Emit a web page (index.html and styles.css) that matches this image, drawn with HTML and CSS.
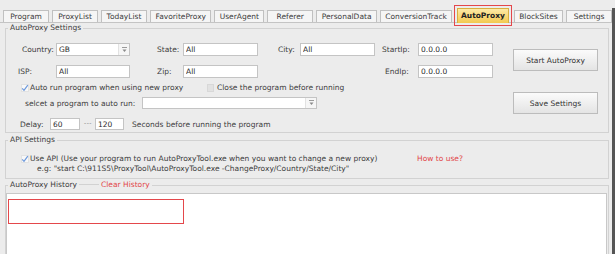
FILE: index.html
```html
<!DOCTYPE html>
<html lang="en">
<head>
	<meta charset="UTF-8">
	<title>AutoProxy</title>
	<link rel="stylesheet" href="styles.css">
</head>
<body>
<div class="window">
	<ul class="tabs">
		<li>Program</li>
		<li>ProxyList</li>
		<li>TodayList</li>
		<li>FavoriteProxy</li>
		<li>UserAgent</li>
		<li>Referer</li>
		<li>PersonalData</li>
		<li>ConversionTrack</li>
		<li class="active">AutoProxy</li>
		<li>BlockSites</li>
		<li>Settings</li>
	</ul>

	<fieldset class="group settings">
		<legend>AutoProxy Settings</legend>
		<div class="body">
			<div class="fields">
				<div class="grid">
					<label class="country">Country:</label>
					<div class="select"><span>GB</span><i class="drop"><svg width="7" height="6" viewBox="0 0 7 6"><path d="M1 0.5H6" stroke="#9a9a9a" stroke-width="1"/><path d="M1.5 2.5H5.5L3.5 5Z" fill="#8a8a8a"/></svg></i></div>
					<label class="col3">State:</label>
					<input type="text" value="All">
					<label class="col5">City:</label>
					<input type="text" value="All">
					<label class="col7">StartIp:</label>
					<input type="text" value="0.0.0.0">

					<label>ISP:</label>
					<input type="text" value="All">
					<label class="col3">Zip:</label>
					<input type="text" value="All">
					<label class="col7 endip">EndIp:</label>
					<input type="text" value="0.0.0.0">
				</div>

				<div class="check-row">
					<span class="check first">
						<i class="box"><svg width="8" height="8" viewBox="0 0 8 8"><path d="M1.2 4.4L3 6.3L6.8 1.2" fill="none" stroke="#6b98dc" stroke-width="1.2"/></svg></i>
						Auto run program when using new proxy
					</span>
					<span class="check">
						<i class="box empty"></i>
						Close the program before running
					</span>
				</div>

				<div class="program-row">
					<label>selcet a program to auto run:</label>
					<div class="select wide"><span></span><i class="drop"><svg width="7" height="6" viewBox="0 0 7 6"><path d="M1 0.5H6" stroke="#9a9a9a" stroke-width="1"/><path d="M1.5 2.5H5.5L3.5 5Z" fill="#8a8a8a"/></svg></i></div>
				</div>

				<div class="delay-row">
					<label>Delay:</label>
					<input type="text" class="from" value="60">
					<span class="dash">---</span>
					<input type="text" class="to" value="120">
					<span class="hint">Seconds before running the program</span>
				</div>
			</div>

			<div class="actions">
				<button class="start">Start AutoProxy</button>
				<button class="save">Save Settings</button>
			</div>
		</div>
	</fieldset>

	<fieldset class="group api">
		<legend>API Settings</legend>
		<div class="body">
			<div class="check-row">
				<span class="check use-api">
					<i class="box"><svg width="8" height="8" viewBox="0 0 8 8"><path d="M1.2 4.4L3 6.3L6.8 1.2" fill="none" stroke="#6b98dc" stroke-width="1.2"/></svg></i>
					Use API (Use your program to run AutoProxyTool.exe when you want to change a new proxy)
				</span>
				<a class="link">How to use?</a>
			</div>
			<p class="example">e.g: "start C:\911S5\ProxyTool\AutoProxyTool.exe -ChangeProxy/Country/State/City"</p>
		</div>
	</fieldset>

	<fieldset class="group history">
		<legend>AutoProxy History<span class="sep"></span><a class="link">Clear History</a></legend>
		<div class="body">
			<div class="log">
				<div class="mark"></div>
			</div>
		</div>
	</fieldset>
</div>
</body>
</html>
```

FILE: styles.css
```css
*{
  margin: 0;
  padding: 0;
  box-sizing: border-box;
}

body{
  width: 615px;
  height: 254px;
  overflow: hidden;
  background: #ececec;
  font: 7.5px "DejaVu Sans", Verdana, sans-serif;
  color: #3c3c3c;
}

.window{
  width: 615px;
  height: 254px;
  border-right: 3px solid #555;
}

/* tabs */

.tabs{
  display: flex;
  align-items: flex-end;
  gap: 3px;
  margin-top: 8px;
  padding-left: 3px;
  list-style: none;
  border-bottom: 1px solid #c4c4c4;
}

.tabs li{
  height: 12px;
  min-width: 46px;
  padding: 0 4.5px;
  border: 1px solid #c0c0c0;
  border-bottom: none;
  background: #f5f5f5;
  line-height: 11px;
  text-align: center;
  white-space: nowrap;
}

.tabs li.active{
  height: 15px;
  margin: 0 2px -1px;
  padding: 0 3px;
  line-height: 14px;
  font-weight: bold;
  color: #222;
  background: linear-gradient(#fdeaa6, #f3c94f);
  border-color: #d8b040;
  outline: 1.5px solid #e4474b;
  outline-offset: 2px;
}

/* group boxes */

.group{
  margin: 0 3px 0 5px;
  border: 1px solid #d2d2d2;
  min-width: 0;
}

.group legend{
  margin-left: 2px;
  padding: 0 2px;
  line-height: 10px;
  white-space: nowrap;
}

.link{
  color: #e2474a;
}

/* settings */

.settings .body{
  display: flex;
  padding: 10px 10px 2px 12px;
}

.fields{
  width: 475px;
}

.grid{
  display: grid;
  grid-template-columns: 38px 74px 53px 75px 42px 75px 43px 75px;
  grid-auto-rows: 13px;
  row-gap: 9px;
  align-items: center;
}

.grid label{
  white-space: nowrap;
}

.grid .country{
  padding-left: 4px;
}

.grid .col3{
  grid-column: 3;
  padding-left: 27px;
}

.grid .col5{
  grid-column: 5;
  padding-left: 20px;
}

.grid .col7{
  grid-column: 7;
  padding-left: 7px;
}

.grid .endip{
  padding-left: 10px;
}

input[type=text]{
  width: 100%;
  height: 13px;
  padding: 0 2px;
  border: 1px solid #c4c4c4;
  background: #fff;
  font: inherit;
  color: #2a2a2a;
  outline: none;
}

.select{
  display: flex;
  align-items: stretch;
  height: 13px;
  padding-left: 2px;
  border: 1px solid #c4c4c4;
  background: #fff;
  color: #2a2a2a;
  line-height: 11px;
}

.select span{
  flex: 1;
}

.select .drop{
  display: flex;
  align-items: center;
  justify-content: center;
  width: 11px;
  border-left: 1px solid #e2e2e2;
  background: #f6f6f6;
}

.check-row{
  display: flex;
  align-items: center;
  height: 11px;
  margin-top: 4px;
  padding-left: 3px;
}

.check{
  display: flex;
  align-items: center;
  gap: 1px;
  white-space: nowrap;
}

.check.first{
  width: 186px;
}

.box{
  display: flex;
  width: 8px;
  height: 8px;
  border: 1px solid #e2e2e2;
  background: #f8f8f8;
}

.box svg{
  margin: -1px;
}

.box.empty{
  width: 7px;
  background: #e2e2e2;
  border-color: #d8d8d8;
  margin-right: 2px;
}

.program-row{
  display: flex;
  align-items: center;
  height: 12px;
  margin-top: 4px;
}

.program-row label{
  width: 124px;
  padding-left: 7px;
  white-space: nowrap;
}

.select.wide{
  width: 175px;
  height: 12px;
}

.delay-row{
  display: flex;
  align-items: center;
  height: 12px;
  margin-top: 9px;
}

.delay-row label{
  width: 32px;
  padding-left: 2px;
}

.delay-row input[type=text]{
  height: 12px;
}

.delay-row .from{
  width: 30px;
}

.delay-row .to{
  width: 29px;
}

.dash{
  margin: -3px 3px 0 4px;
  letter-spacing: 0.5px;
  font-size: 6px;
  color: #777;
}

.hint{
  margin-left: 8px;
}

.actions{
  display: flex;
  flex-direction: column;
  width: 85px;
  margin-left: auto;
}

.actions button{
  width: 85px;
  height: 22px;
  border: 1px solid #bcbcbc;
  background: linear-gradient(#fbfbfb, #e4e4e4);
  font: inherit;
  color: #333;
}

.actions .start{
  margin-top: 6px;
}

.actions .save{
  margin-top: 21px;
}

/* api */

.api{
  margin-top: 2px;
}

.api .body{
  padding: 8px 0 4px;
}

.api .check-row{
  margin-top: 0;
  padding-left: 15px;
}

.check.use-api{
  width: 396px;
}

.example{
  padding-left: 31px;
  line-height: 10px;
}

/* history */

.history{
  margin-top: 1px;
}

.sep{
  display: inline-block;
  width: 20px;
  margin: 0 2px;
  border-top: 1px solid #d2d2d2;
  vertical-align: middle;
}

.history .body{
  padding: 3px 1px 0 0;
}

.log{
  height: 70px;
  padding: 5px 0 0 1px;
  border: 1px solid #c8c8c8;
  background: #fff;
}

.mark{
  width: 176px;
  height: 25px;
  border: 1.5px solid #e4474b;
}
```
